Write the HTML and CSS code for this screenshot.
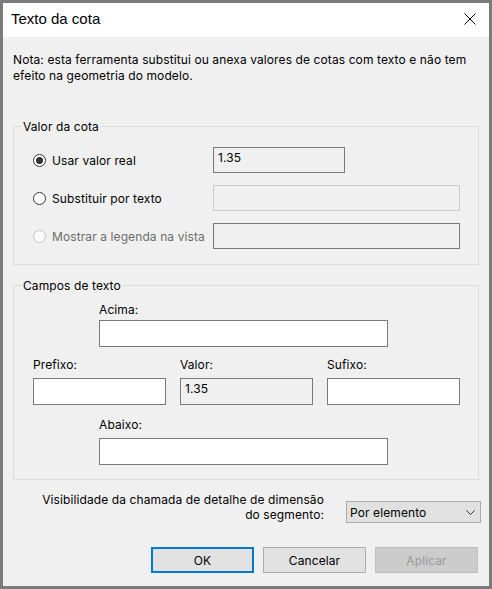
FILE: index.html
```html
<!DOCTYPE html>
<html lang="pt">
<head>
<meta charset="utf-8">
<title>Texto da cota</title>
<link rel="stylesheet" href="styles.css">
</head>
<body>
<div class="dialog">
  <div class="titlebar">
    <span class="title">Texto da cota</span>
    <svg class="close" width="12" height="12" viewBox="0 0 12 12"><path d="M0.5 0.5 L11.5 11.5 M11.5 0.5 L0.5 11.5" stroke="#000" stroke-width="1" fill="none"/></svg>
  </div>
  <div class="content">
    <p class="note">Nota: esta ferramenta substitui ou anexa valores de cotas com texto e não tem<br>efeito na geometria do modelo.</p>

    <div class="group group-valor">
      <div class="group-title">Valor da cota</div>
      <div class="radio-rows">
        <label class="radio-label"><span class="radio checked"></span>Usar valor real</label>
        <div class="textbox readonly short">1.35</div>
        <label class="radio-label"><span class="radio"></span>Substituir por texto</label>
        <div class="textbox disabled"></div>
        <label class="radio-label disabled-text"><span class="radio radio-disabled"></span>Mostrar a legenda na vista</label>
        <div class="textbox readonly"></div>
      </div>
    </div>

    <div class="group group-campos">
      <div class="group-title">Campos de texto</div>
      <div class="field wide-field first-field">
        <div class="field-label">Acima:</div>
        <div class="textbox white tight"></div>
      </div>
      <div class="mid-row">
        <div class="field">
          <div class="field-label">Prefixo:</div>
          <div class="textbox white"></div>
        </div>
        <div class="field">
          <div class="field-label">Valor:</div>
          <div class="textbox readonly">1.35</div>
        </div>
        <div class="field">
          <div class="field-label">Sufixo:</div>
          <div class="textbox white"></div>
        </div>
      </div>
      <div class="field wide-field last-field">
        <div class="field-label">Abaixo:</div>
        <div class="textbox white"></div>
      </div>
    </div>

    <div class="vis-row">
      <div class="vis-label">Visibilidade da chamada de detalhe de dimensão<br>do segmento:</div>
      <div class="select">
        <span>Por elemento</span>
        <svg class="chevron" width="9" height="5" viewBox="0 0 9 5"><path d="M0.5 0.5 L4.5 4.5 L8.5 0.5" stroke="#333" stroke-width="1" fill="none"/></svg>
      </div>
    </div>

    <div class="buttons">
      <div class="button default">OK</div>
      <div class="button">Cancelar</div>
      <div class="button button-disabled">Aplicar</div>
    </div>
  </div>
</div>
</body>
</html>
```
FILE: styles.css
```css
html {
  background: #7b7b7b;
}
body {
  margin: 0;
  padding: 3px;
  font-family: Inter, "Noto Sans", "Liberation Sans", Arial, sans-serif;
  font-size: 12px;
  letter-spacing: 0.1px;
  color: #000;
}
.dialog {
  width: 486px;
  height: 583px;
  background: #f0f0f0;
  display: flex;
  flex-direction: column;
}
.titlebar {
  height: 34px;
  background: #fff;
  display: flex;
  align-items: center;
  justify-content: space-between;
  padding: 0 13px 0 8px;
  flex-shrink: 0;
}
.title {
  font-family: "Liberation Sans", Arial, sans-serif;
  font-size: 15px;
  letter-spacing: 0;
  line-height: 20px;
  margin-bottom: 2px;
}
.close {
  display: block;
  margin-bottom: 2px;
}
.content {
  padding: 0 10px;
}
.note {
  margin: 15px 0 0 0;
  line-height: 16px;
}
.group {
  border: 1px solid #dcdcdc;
}
.group-valor {
  margin-top: 42px;
  padding-bottom: 15px;
}
.group-campos {
  margin-top: 20px;
  padding-bottom: 14px;
}
.group-title {
  width: fit-content;
  margin: -8px 0 0 7px;
  padding: 0 2px;
  background: #f0f0f0;
  line-height: 15px;
  height: 15px;
}
.radio-rows {
  display: grid;
  grid-template-columns: 180px 247px;
  grid-auto-rows: 26px;
  row-gap: 12px;
  margin-top: 13px;
  padding-left: 19px;
}
.radio-label {
  display: flex;
  align-items: center;
  gap: 6px;
  line-height: 15px;
  white-space: nowrap;
}
.radio {
  width: 13px;
  height: 13px;
  box-sizing: border-box;
  border: 1px solid #333;
  border-radius: 50%;
  background: #fff;
  display: flex;
  align-items: center;
  justify-content: center;
  flex-shrink: 0;
}
.radio.checked::after {
  content: "";
  width: 7px;
  height: 7px;
  border-radius: 50%;
  background: #333;
}
.radio-disabled {
  border-color: #c2c2c2;
  background: #fcfcfc;
}
.disabled-text {
  color: #6d6d6d;
}
.textbox {
  box-sizing: border-box;
  height: 26px;
  border: 1px solid #7a7a7a;
  padding: 2px 0 0 4px;
  line-height: 15px;
}
.textbox.short {
  width: 132px;
}
.readonly {
  background: #f0f0f0;
}
.disabled {
  background: #f0f0f0;
  border-color: #cccccc;
}
.white {
  background: #fff;
}
.group-campos .textbox {
  height: 27px;
  width: 133px;
}
.group-campos .wide-field .textbox {
  width: 289px;
}
.field-label {
  line-height: 15px;
  height: 15px;
}
.wide-field {
  margin-left: 85px;
}
.first-field {
  margin-top: 9px;
}
.first-field .field-label {
  margin-bottom: 3px;
}
.mid-row {
  display: flex;
  gap: 14px;
  margin-top: 10px;
  padding-left: 19px;
}
.mid-row .field-label,
.last-field .field-label {
  margin-bottom: 6px;
}
.last-field {
  margin-top: 12px;
}
.vis-row {
  display: flex;
  justify-content: flex-end;
  align-items: flex-start;
  gap: 22px;
  margin-top: 13px;
  margin-right: -2px;
}
.vis-label {
  text-align: right;
  line-height: 14.5px;
}
.select {
  box-sizing: border-box;
  width: 135px;
  height: 22px;
  margin-top: 8px;
  background: #e1e1e1;
  border: 1px solid #adadad;
  display: flex;
  align-items: center;
  justify-content: space-between;
  padding: 0 5px 0 3px;
}
.chevron {
  display: block;
}
.buttons {
  display: flex;
  justify-content: flex-end;
  gap: 9px;
  margin-top: 24px;
  padding-right: 1px;
}
.button {
  box-sizing: border-box;
  width: 103px;
  height: 26px;
  background: #e1e1e1;
  border: 1px solid #adadad;
  display: flex;
  align-items: center;
  justify-content: center;
}
.button.default {
  border: 2px solid #0078d7;
}
.button-disabled {
  background: #cccccc;
  border-color: #bfbfbf;
  color: #9a9a9a;
}
```
